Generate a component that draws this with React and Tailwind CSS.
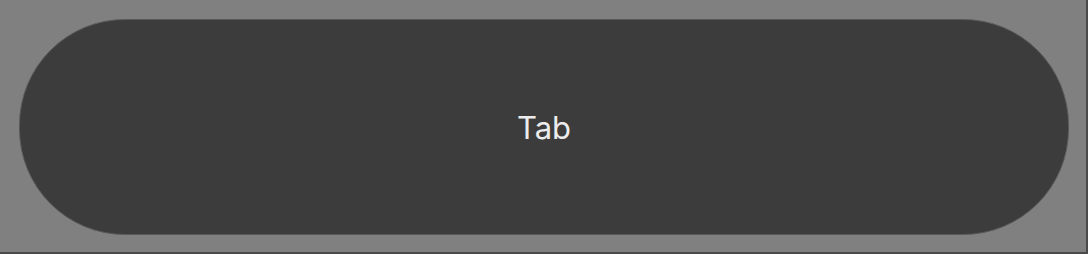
export default function App() {
  return (
    <div className="w-[1088px] h-[254px] bg-[#4a4a4a]">
      <div className="w-[1086px] h-[252px] bg-[#808080] pt-[19px] pl-[19px]">
        <div className="w-[1050px] h-[216px] rounded-[106px] bg-[#3c3c3c] border border-[#595959] flex items-center justify-center">
          <span
            className="text-[#ececec] text-[31px] leading-none"
            style={{ fontFamily: "Inter, 'Noto Sans', sans-serif" }}
          >
            Tab
          </span>
        </div>
      </div>
    </div>
  );
}
